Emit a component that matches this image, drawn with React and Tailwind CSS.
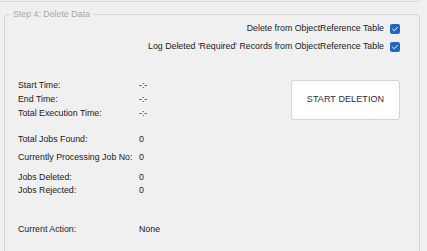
import React from 'react';

const Check = () => (
    <span className="w-[10px] h-[10px] rounded-[2px] bg-[#1b6ac9] flex items-center justify-center">
        <svg width="8" height="8" viewBox="0 0 8 8" fill="none">
            <path d="M1.6 4.2 L3.2 5.7 L6.4 2.4" stroke="white" strokeWidth="1" strokeLinecap="round" strokeLinejoin="round" />
        </svg>
    </span>
);

const Row = ({ label, value, className = '' }) => (
    <div className={`flex h-[14px] items-center ${className}`}>
        <span className="w-[121px]">{label}</span>
        <span>{value}</span>
    </div>
);

const App = () => {
    return (
        <div className="w-[427px] h-[251px] bg-[#f0f0f0] overflow-hidden text-[8.8px] text-[#1a1a1a]" style={{ fontFamily: '"Liberation Sans", Arial, sans-serif' }}>
            {/* bottom edge of the previous step box */}
            <div className="w-[420px] h-[2px] border-b border-r border-[#d6d6d6] rounded-br-[3px]" />

            <fieldset className="ml-[4px] mt-[5px] w-[416px] h-[260px] border border-[#d6d6d6] rounded-[3px] pl-[13px] pr-[19px]">
                <legend className="ml-[-8px] px-[3px] text-[#a8a8a8] leading-[14px]">Step 4: Delete Data</legend>

                {/* Options */}
                <div className="flex flex-col items-end gap-[8px] mt-[3px]">
                    <label className="flex items-center gap-[6px] h-[10px]">
                        <span>Delete from ObjectReference Table</span>
                        <Check />
                    </label>
                    <label className="flex items-center gap-[6px] h-[10px]">
                        <span>Log Deleted 'Required' Records from ObjectReference Table</span>
                        <Check />
                    </label>
                </div>

                <div className="flex justify-between mt-[27px]">
                    <div className="flex flex-col">
                        <Row label="Start Time:" value="-:-" />
                        <Row label="End Time:" value="-:-" />
                        <Row label="Total Execution Time:" value="-:-" />
                        <Row label="Total Jobs Found:" value="0" className="mt-[12px]" />
                        <Row label="Currently Processing Job No:" value="0" className="mt-[4px]" />
                        <Row label="Jobs Deleted:" value="0" className="mt-[6px]" />
                        <Row label="Jobs Rejected:" value="0" className="mt-[-1px]" />
                        <Row label="Current Action:" value="None" className="mt-[25px]" />
                    </div>
                    <button className="mt-[1px] w-[109px] h-[40px] bg-white border border-[#d4d4d4] rounded-[3px] text-[#2e2e3c] text-[9px] font-medium tracking-[0.1px]">
                        START DELETION
                    </button>
                </div>
            </fieldset>
        </div>
    );
};

export default App;
